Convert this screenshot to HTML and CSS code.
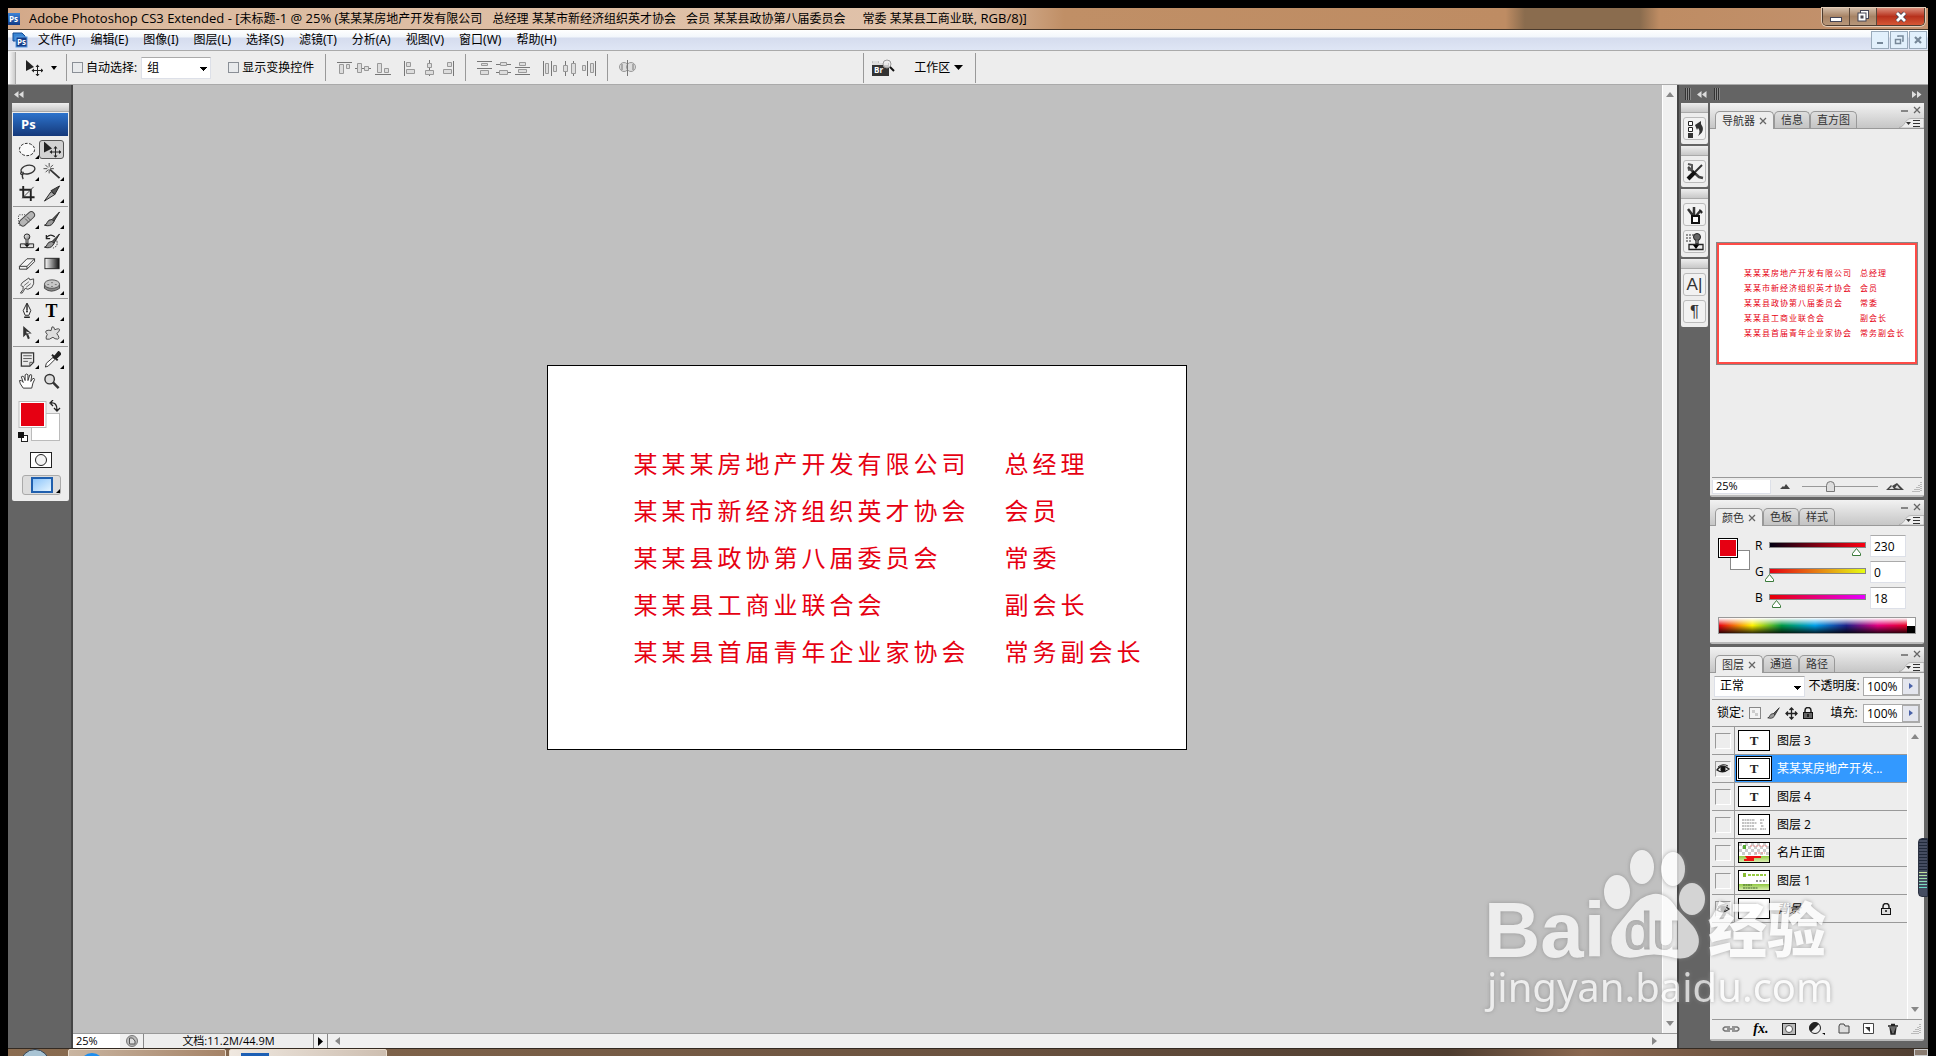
FILE: index.html
```html
<!DOCTYPE html>
<html lang="zh-CN">
<head>
<meta charset="utf-8">
<title>Adobe Photoshop CS3 Extended</title>
<link rel="stylesheet" href="styles.css">
</head>
<body>
<svg class="defs" aria-hidden="true">
  <defs>
    <linearGradient id="metal" x1="0" y1="0" x2="1" y2="1"><stop offset="0" stop-color="#fff"/><stop offset="1" stop-color="#777"/></linearGradient>
    <linearGradient id="bw"><stop offset="0" stop-color="#fff"/><stop offset="1" stop-color="#111"/></linearGradient>
    <linearGradient id="sky" x1="0" y1="0" x2="1" y2="1"><stop offset="0" stop-color="#8cc4fa"/><stop offset="1" stop-color="#e4f4ff"/></linearGradient>
    <linearGradient id="blue" x1="0" y1="0" x2="0" y2="1"><stop offset="0" stop-color="#3d84d8"/><stop offset="1" stop-color="#123b86"/></linearGradient>
    <linearGradient id="leaf" x1="0" y1="0" x2="0" y2="1"><stop offset="0" stop-color="#8fc740"/><stop offset="1" stop-color="#dcefb4"/></linearGradient>
    <symbol id="move" viewBox="0 0 18 16"><path d="M1 0v11l8-4z" fill="#222"/><path d="M12.500 6v9M8 10.500h9" stroke="#222"/><path d="M12.500 4.500l2 2.500h-4zM12.500 16.500l2-2.500h-4zM6.500 10.500l2.500-2v4zM18.500 10.500l-2.500-2v4z" fill="#222"/></symbol>
    <symbol id="handle" viewBox="0 0 9 8"><path d="M4.500.500l4 5v2h-8v-2z" fill="#fff" stroke="#3a7a3a"/></symbol>
    <symbol id="tri-l" viewBox="0 0 10 7"><path d="M4.500 0v7L0 3.500zM9.500 0v7L5 3.500z" fill="#ddd"/></symbol>
    <symbol id="tri-r" viewBox="0 0 10 7"><path d="M0 0v7l4.500-3.500zM5 0v7l4.500-3.500z" fill="#ddd"/></symbol>
    <symbol id="menu" viewBox="0 0 25 10"><path d="M0 9.500C6 9 6 .500 12 .500h13V10H0z" fill="#ededed" stroke="#999" stroke-width=".6"/><path d="M7 4h5l-2.500 3z" fill="#333"/><path d="M14 2.500h7M14 5.500h7M14 8.500h7" stroke="#333"/></symbol>
    <symbol id="min" viewBox="0 0 8 8"><path d="M1 5h7" stroke="#666" stroke-width="1.500"/></symbol>
    <symbol id="x" viewBox="0 0 8 8"><path d="M1 1l6 6M7 1L1 7" stroke="#666" stroke-width="1.300"/></symbol>
    <symbol id="eye" viewBox="0 0 14 10"><path d="M1 6Q6-1 13 5Q7 10 1 6z" fill="#fff" stroke="#222" stroke-width="1.300"/><circle cx="7" cy="5" r="2.600" fill="#111"/><path d="M2 3Q7-1 12 2" stroke="#222" fill="none"/></symbol>
    <symbol id="lock" viewBox="0 0 10 12"><path d="M2 6V3.500a3 3 0 0 1 6 0V6" fill="none" stroke="#222" stroke-width="1.500"/><rect x=".5" y="5.500" width="9" height="6" fill="#666" stroke="#111"/><path d="M5 7v3" stroke="#111" stroke-width="1.500"/></symbol>
    <symbol id="lock-open" viewBox="0 0 10 12"><path d="M2 6V3.500a3 3 0 0 1 6 0V6" fill="none" stroke="#222" stroke-width="1.500"/><rect x=".5" y="5.500" width="9" height="6" fill="#ddd" stroke="#111"/><path d="M5 7v2" stroke="#111" stroke-width="1.500"/></symbol>
    <symbol id="grip" viewBox="0 0 10 10"><path d="M9 0v10M7 3v7M5 5v5M3 7v3M1 9v1" stroke="#888" stroke-dasharray="1 1"/></symbol>
    <symbol id="brush" viewBox="0 0 18 18"><path d="M17 1L9 9l2 2z" fill="#555" stroke="#222"/><path d="M9 9Q5 9 4 12T1 15Q7 17 10 13L11 11z" fill="#999" stroke="#222"/></symbol>
    <symbol id="stamp" viewBox="0 0 18 18"><circle cx="9" cy="4" r="3" fill="url(#metal)" stroke="#222"/><path d="M8 7v4h2V7M2 11.500h14v4H2z" fill="#ddd" stroke="#222"/><path d="M6 12h6l-3 3z" fill="#111"/></symbol>
  </defs>
</svg>

<div class="window">
<header class="titlebar">
  <svg class="ic12" viewBox="0 0 12 12"><rect width="12" height="12" fill="url(#blue)"/><text x="1" y="9" class="ps-mini">Ps</text></svg>
  <h1>Adobe Photoshop CS3 Extended - [<span>未标题</span>-1 @ 25% (<span>某某某房地产开发有限公司</span>&nbsp;&nbsp; <span>总经理</span> <span>某某市新经济组织英才协会</span>&nbsp;&nbsp; <span>会员</span> <span>某某县政协第八届委员会</span>&nbsp;&nbsp;&nbsp;&nbsp; <span>常委</span> <span>某某县工商业联</span>, RGB/8)]</h1>
  <div class="winbtns">
    <button class="wb" aria-label="最小化"><svg width="12" height="12" viewBox="0 0 12 12"><rect x=".5" y="6.500" width="11" height="4" fill="#fff" stroke="#445"/></svg></button>
    <button class="wb" aria-label="还原"><svg width="13" height="13" viewBox="0 0 13 13"><rect x="3.500" y=".5" width="8" height="8" fill="#fff" stroke="#445"/><rect x="1" y="3" width="8" height="8" fill="#fff" stroke="#445"/><rect x="4" y="6" width="2" height="2" fill="#654" stroke="#445"/></svg></button>
    <button class="wb close" aria-label="关闭"><svg width="12" height="12" viewBox="0 0 12 12"><path d="M2 2l8 8M10 2l-8 8" stroke="#445" stroke-width="4.500"/><path d="M2 2l8 8M10 2l-8 8" stroke="#fff" stroke-width="2.800"/></svg></button>
  </div>
</header>

<nav class="menubar">
  <svg width="16" height="16" viewBox="0 0 16 16"><path d="M1 1h9l3 3v5H1z" fill="#3a86d4" stroke="#124a94"/><rect x="4" y="5" width="11" height="10" fill="#123b86" stroke="#5a9be0"/><text x="5" y="13" class="ps-mini">Ps</text></svg>
  <div class="menus">
    <button>文件(F)</button><button>编辑(E)</button><button>图像(I)</button><button>图层(L)</button><button>选择(S)</button><button>滤镜(T)</button><button>分析(A)</button><button>视图(V)</button><button>窗口(W)</button><button>帮助(H)</button>
  </div>
  <div class="mdi">
    <button aria-label="最小化"><svg width="12" height="12" viewBox="0 0 12 12"><path d="M3 9h6" stroke="#789" stroke-width="2"/></svg></button>
    <button aria-label="还原"><svg width="12" height="12" viewBox="0 0 12 12"><path d="M5 3V2h5v5H9M2.500 5.500h5v4h-5z" fill="none" stroke="#789" stroke-width="1.500"/></svg></button>
    <button aria-label="关闭"><svg width="12" height="12" viewBox="0 0 12 12"><path d="M3 3l6 6M9 3l-6 6" stroke="#789" stroke-width="2.200"/></svg></button>
  </div>
</nav>

<div class="options">
  <div class="opt-grip"></div>
  <button class="opt-move" aria-label="移动工具"><svg width="18" height="16"><use href="#move"/></svg><svg width="6" height="4" viewBox="0 0 6 4"><path d="M0 0h6L3 4z"/></svg></button>
  <i class="vr"></i>
  <label class="chk"><input type="checkbox">自动选择:</label>
  <select class="opt-sel" aria-label="自动选择"><option>组</option></select>
  <label class="chk second"><input type="checkbox">显示变换控件</label>
  <i class="vr"></i>
  <div class="aligns">
    <svg viewBox="0 0 54 16" width="54" height="16"><path d="M0 2.500h15M18 8.500h16M38 14.500h16"/><path class="b" d="M2.500 4.500h4v9h-4zM9.500 4.500h3v4h-3zM20.500 3.500h4v9h-4zM27.500 6.500h4v4h-4zM40.500 3.500h4v9h-4zM47.500 8.500h4v4h-4z"/></svg>
    <svg viewBox="0 0 52 16" width="52" height="16"><path d="M1.500 1v15M26.500 0v16M50.500 1v15"/><path class="b" d="M3.500 2.500h4v4h-4zM3.500 9.500h8v4h-8zM24.500 3.500h4v4h-4zM22.500 10.500h8v4h-8zM44.500 2.500h4v4h-4zM40.500 9.500h8v4h-8z"/></svg>
  </div>
  <i class="vr"></i>
  <div class="aligns">
    <svg viewBox="0 0 54 16" width="54" height="16"><path d="M0 1.500h15M0 8.500h15M19 4.500h15M19 12.500h15M38 7.500h15M38 14.500h15"/><path class="b" d="M4.500 3.500h6v2h-6zM3.500 10.500h8v4h-8zM23.500 2.500h6v3h-6zM22.500 10.500h8v4h-8zM42.500 2.500h6v3h-6zM41.500 9.500h8v3h-8z"/></svg>
    <svg viewBox="0 0 54 16" width="54" height="16"><path d="M.5 1v15M8.500 1v15M22.500 1v15M30.500 1v15M44.500 1v15M52.500 1v15"/><path class="b" d="M2.500 3.500h3v10h-3zM10.500 5.500h3v6h-3zM20.500 5.500h4v6h-4zM28.500 3.500h4v10h-4zM39.500 5.500h3v5h-3zM47.500 3.500h3v9h-3z"/></svg>
  </div>
  <i class="vr"></i>
  <div class="aligns"><svg viewBox="0 0 17 16" width="17" height="16"><circle cx="5" cy="7" r="4.500" class="b"/><circle cx="12" cy="7" r="4.500" class="b"/><path d="M8.500 0v16M3 4v6M14 4v6"/></svg></div>
  <div class="bridge">
    <button aria-label="转到 Bridge"><svg width="24" height="17" viewBox="0 0 24 17"><path d="M0 4l1-2h5l1 2h10v13H0z" fill="#333"/><path d="M0 4l1-2h5l1 2h9v2H0z" fill="#ddd"/><text x="2" y="14" class="br-mini">Br</text><circle cx="15" cy="5" r="4" fill="#eee" fill-opacity=".8" stroke="#999"/><path d="M18 8l4 4" stroke="#111" stroke-width="2"/></svg></button>
    <button class="ws">工作区<svg width="9" height="6" viewBox="0 0 9 6"><path d="M0 0h9L4.500 5z"/></svg></button>
  </div>
</div>

<main class="work">
  <aside class="toolcol">
    <button class="collapse" aria-label="折叠工具"><svg width="10" height="7"><use href="#tri-l"/></svg></button>
    <div class="toolbox">
      <div class="strip"></div>
      <div class="banner">Ps</div>
      <div class="tools">
        <button class="more" aria-label="椭圆选框"><svg viewBox="0 0 18 18"><ellipse cx="9" cy="9" rx="8" ry="6.500" fill="#fafafa" stroke="#222" stroke-dasharray="3 1.500"/></svg></button>
        <button class="on" aria-label="移动"><svg viewBox="0 0 18 16"><use href="#move"/></svg></button>
        <button class="more" aria-label="套索"><svg viewBox="0 0 18 18"><ellipse cx="10" cy="7" rx="7.500" ry="4.500" transform="rotate(-12 10 7)" fill="none" stroke="#333" stroke-width="1.400"/><path d="M4 9q-3 2-1 3t2-1q-2 3 0 6" fill="none" stroke="#333" stroke-width="1.300"/></svg></button>
        <button class="more" aria-label="魔棒"><svg viewBox="0 0 18 18"><path d="M7 7l10 9" stroke="#333" stroke-width="2"/><path d="M6 0v12M0 6h12M2 2l8 8M10 2l-8 8" stroke="#444" stroke-dasharray="4 3"/></svg></button>
        <button aria-label="裁剪"><svg viewBox="0 0 18 18"><path d="M5 1v12h12M1 5h12v12" fill="none" stroke="#222" stroke-width="2"/><path d="M4 14L16 2" stroke="#444"/></svg></button>
        <button class="more" aria-label="切片"><svg viewBox="0 0 18 18"><path d="M1 17L8 7l4 3z" fill="#aaa" stroke="#222"/><path d="M8 6l4 4 5-9z" fill="#555" stroke="#222"/></svg></button>
      </div>
      <hr>
      <div class="tools">
        <button class="more" aria-label="修复画笔"><svg viewBox="0 0 18 18"><path d="M0 5v9M1 4h6M1 15h6" stroke="#222" stroke-dasharray="1 1.500"/><rect x="0" y="5" width="19" height="7" rx="3.500" transform="rotate(-42 9 9)" fill="#b5b5b5" stroke="#444"/><path d="M7 8l4 4M9 6l4 4" stroke="#555"/></svg></button>
        <button class="more" aria-label="画笔"><svg viewBox="0 0 18 18"><use href="#brush"/></svg></button>
        <button class="more" aria-label="仿制图章"><svg viewBox="0 0 18 18"><use href="#stamp"/></svg></button>
        <button class="more" aria-label="历史记录画笔"><svg viewBox="0 0 18 18"><use href="#brush"/><path d="M3 5q4-5 9-1M3 2v4h4" fill="none" stroke="#222" stroke-width="1.300"/><path d="M14 8q2 6-4 8" fill="none" stroke="#333" stroke-dasharray="2 1"/></svg></button>
        <button class="more" aria-label="橡皮擦"><svg viewBox="0 0 18 18"><path d="M1 12L9 4h8l-8 8zM1 12v3h8v-3M9 15l8-8V4" fill="#f4f4f4" stroke="#333"/></svg></button>
        <button class="more" aria-label="渐变"><svg viewBox="0 0 18 18"><rect x="1.500" y="3.500" width="15" height="11" fill="url(#bw)" stroke="#222"/></svg></button>
        <button class="more" aria-label="涂抹"><svg viewBox="0 0 18 18"><path d="M2 17q4-4 3-7Q1 10 4 6L11 1l1 2 4-1q1 6-2 9l-4 2-3-1-3 5z" fill="#eee" stroke="#444"/><path d="M6 9l5-4M8 11l5-4" stroke="#666"/></svg></button>
        <button class="more" aria-label="海绵"><svg viewBox="0 0 18 18"><path d="M1 8v4q7 6 16 0V8" fill="#888" stroke="#444"/><ellipse cx="9" cy="7.500" rx="8" ry="4.500" fill="#c8c8c8" stroke="#555"/><path d="M4 8h2M8 6h2M12 8h2M8 10h2" stroke="#777"/></svg></button>
      </div>
      <hr>
      <div class="tools">
        <button class="more" aria-label="钢笔"><svg viewBox="0 0 18 18"><path d="M9 0l4 8-2 5H7L5 8z" fill="#f6f6f6" stroke="#222"/><path d="M9 1v7M6 15h6" stroke="#222" stroke-width="1.500"/><circle cx="9" cy="9" r="1" fill="#222"/></svg></button>
        <button class="more type" aria-label="文字">T</button>
        <button class="more" aria-label="路径选择"><svg viewBox="0 0 18 18"><path d="M5 1v12l3-3 2 5 2-1-2-5h4z" fill="#333"/><path d="M8 7l4 1-3 1 1 3" fill="#eee"/></svg></button>
        <button class="more" aria-label="形状"><svg viewBox="0 0 18 18"><path d="M9 2q2-1 3 3 5-2 5 0 0 2-3 4 4 5 1 6-3 0-5-2-4 3-7 2-1-2 1-5-3-3-1-4 3-1 5 0z" fill="#ddd" stroke="#444"/></svg></button>
      </div>
      <hr>
      <div class="tools">
        <button class="more" aria-label="注释"><svg viewBox="0 0 18 18"><path d="M3 2h13v10l-4 4H3z" fill="#e8e8e8" stroke="#333" stroke-width="1.300"/><path d="M5 5h9M5 8h9M5 11h5M12 16v-4h4" stroke="#555" fill="none"/></svg></button>
        <button class="more" aria-label="吸管"><svg viewBox="0 0 18 18"><path d="M2 17l1-4 8-7 2 2-8 8z" fill="#fff" stroke="#333"/><path d="M9 4l6 6M11 7l5-6 2 2-5 5z" stroke="#222" stroke-width="2" fill="#222"/></svg></button>
        <button aria-label="抓手"><svg viewBox="0 0 18 18"><path d="M5 16Q1 11 1 8q2-1 4 2L3 4q2-2 3 1l1 3L7 2q2-2 3 0l0 6 2-6q2-1 2 1l-1 6 2-3q2-1 2 1-2 3-3 9z" fill="#fff" stroke="#333"/></svg></button>
        <button aria-label="缩放"><svg viewBox="0 0 18 18"><circle cx="6.500" cy="6.500" r="5" fill="#ddd" stroke="#333" stroke-width="1.500"/><path d="M10 10l6 6" stroke="#333" stroke-width="2.600"/></svg></button>
      </div>
      <div class="swatches">
        <svg width="46" height="46" viewBox="0 0 46 46"><rect x="14.500" y="13.500" width="28" height="27" fill="#fff" stroke="#bbb"/><rect x="2" y="1.500" width="27" height="26" fill="#fff" stroke="#bbb"/><rect x="4" y="3" width="23" height="23" fill="#e60012"/><path d="M34 3q6-1 6 7M36 0l-3 3 3 3M37 8l3 3 3-3" fill="none" stroke="#222" stroke-width="1.300"/><rect x="4.500" y="35.500" width="6" height="6" fill="#fff" stroke="#222"/><rect x="1" y="32" width="6" height="6" fill="#111"/></svg>
      </div>
      <button class="mask" aria-label="快速蒙版"><svg width="22" height="16" viewBox="0 0 22 16"><rect x=".5" y=".5" width="21" height="15" fill="#fff" stroke="#222"/><circle cx="11" cy="8" r="5.500" fill="#f4f4f4" stroke="#222"/></svg></button>
      <button class="screen more" aria-label="屏幕模式"><svg width="22" height="16" viewBox="0 0 22 16"><rect width="22" height="16" fill="#1f5fae"/><rect x="2" y="2" width="18" height="12" fill="url(#sky)"/></svg></button>
    </div>
  </aside>

  <section class="docarea">
    <div class="canvas">
      <article class="card">
        <p><span>某某某房地产开发有限公司</span><span>总经理</span></p>
        <p><span>某某市新经济组织英才协会</span><span>会员</span></p>
        <p><span>某某县政协第八届委员会</span><span>常委</span></p>
        <p><span>某某县工商业联合会</span><span>副会长</span></p>
        <p><span>某某县首届青年企业家协会</span><span>常务副会长</span></p>
      </article>
    </div>
    <div class="vscroll"><svg width="8" height="5" viewBox="0 0 8 5"><path d="M4 0l4 5H0z"/></svg><svg width="8" height="5" viewBox="0 0 8 5"><path d="M4 5L0 0h8z"/></svg></div>
    <footer class="status">
      <input class="zoom" aria-label="缩放比例" value="25%">
      <span class="sticon"><svg width="12" height="12" viewBox="0 0 12 12"><circle cx="6" cy="6" r="5.500" fill="#bbb" stroke="#777"/><path d="M3.500 3h3l2.500 3v3H3.500z" fill="#ddd" stroke="#555"/></svg></span>
      <span class="docinfo">文档:11.2M/44.9M</span>
      <button class="play" aria-label="更多"><svg width="5" height="9" viewBox="0 0 5 9"><path d="M0 0l5 4.500L0 9z"/></svg></button>
      <div class="hscroll"><svg width="5" height="8" viewBox="0 0 5 8"><path d="M5 0v8L0 4z"/></svg><svg width="5" height="8" viewBox="0 0 5 8"><path d="M0 0v8l5-4z"/></svg></div>
    </footer>
  </section>

  <aside class="dock">
    <div class="dockhead"><i class="bars"></i><svg width="10" height="7"><use href="#tri-l"/></svg><i class="bars wide"></i><svg class="end" width="10" height="7"><use href="#tri-r"/></svg></div>
    <div class="dockbody">
      <div class="iconcol">
        <div class="icongroup"><div class="strip"></div><button aria-label="历史记录"><svg viewBox="0 0 18 18"><path d="M2.500 1.500h4v4h-4zM2.500 7.500h4v4h-4z" fill="#fff" stroke="#222"/><path d="M2 13h5v5H2z" fill="#333"/><path d="M9 5l6-4v3q5 7-3 12 3-5 0-8l-1 2z" fill="#333"/></svg></button></div>
        <div class="icongroup"><div class="strip"></div><button aria-label="工具预设"><svg viewBox="0 0 18 18"><path d="M2 4l11 10 4 1" stroke="#444" stroke-width="2.500" fill="none"/><path d="M2 1l4 1v4L2 7" fill="none" stroke="#555" stroke-width="2"/><path d="M16 2L9 9" stroke="#333" stroke-width="2"/><path d="M9 9l-7 7" stroke="#111" stroke-width="4"/></svg></button></div>
        <div class="icongroup"><div class="strip"></div><button aria-label="画笔"><svg viewBox="0 0 18 18"><path d="M2 3l6 8M8 1v8M15 4l-5 6" stroke="#333" stroke-width="2.500"/><path d="M13 3l4 3-2 2z" fill="#222"/><rect x="6" y="10" width="7" height="7" fill="#fff" stroke="#111" stroke-width="2"/></svg></button><button aria-label="仿制源"><svg viewBox="0 0 18 18"><path d="M0 2h8M0 5h6M0 8h6" stroke="#333" stroke-dasharray="2 1"/><circle cx="11" cy="4" r="3.500" fill="#666" stroke="#222"/><path d="M10 7v4h2V7M3 11.500h14v5H3z" fill="#eee" stroke="#222" stroke-width="1.300"/><path d="M7 12h6l-3 4z"/></svg></button></div>
        <div class="icongroup"><div class="strip"></div><button class="glyph" aria-label="字符">A|</button><button class="glyph" aria-label="段落">¶</button></div>
      </div>

      <div class="panels">
        <section class="panel nav">
          <div class="phead"><div class="tabs"><button class="tab on">导航器<svg width="8" height="8"><use href="#x"/></svg></button><button class="tab">信息</button><button class="tab">直方图</button></div><div class="pctl"><span><button aria-label="最小化"><svg width="8" height="8"><use href="#min"/></svg></button><button aria-label="关闭"><svg width="8" height="8"><use href="#x"/></svg></button></span><svg width="25" height="10"><use href="#menu"/></svg></div></div>
          <div class="navview">
            <div class="thumb">
              <p><span>某某某房地产开发有限公司</span><span>总经理</span></p>
              <p><span>某某市新经济组织英才协会</span><span>会员</span></p>
              <p><span>某某县政协第八届委员会</span><span>常委</span></p>
              <p><span>某某县工商业联合会</span><span>副会长</span></p>
              <p><span>某某县首届青年企业家协会</span><span>常务副会长</span></p>
            </div>
          </div>
          <div class="navfoot">
            <input aria-label="导航缩放" value="25%">
            <svg width="10" height="5" viewBox="0 0 10 5"><path d="M0 5l3-3 1 1 2-3 4 5z" fill="#444"/></svg>
            <input type="range" aria-label="缩放滑块" min="0" max="100" value="36">
            <svg width="18" height="7" viewBox="0 0 18 7"><path d="M0 7l5-5 1 1 5-3 7 7z" fill="#444"/><path d="M3 6l3-3 2 3M9 5l2-3 3 4" fill="#ddd"/></svg>
            <svg class="end" width="10" height="10"><use href="#grip"/></svg>
          </div>
        </section>

        <section class="panel">
          <div class="phead"><div class="tabs"><button class="tab on">颜色<svg width="8" height="8"><use href="#x"/></svg></button><button class="tab">色板</button><button class="tab">样式</button></div><div class="pctl"><span><button aria-label="最小化"><svg width="8" height="8"><use href="#min"/></svg></button><button aria-label="关闭"><svg width="8" height="8"><use href="#x"/></svg></button></span><svg width="25" height="10"><use href="#menu"/></svg></div></div>
          <div class="color">
            <svg width="33" height="33" viewBox="0 0 33 33"><rect x="12.500" y="12.500" width="19" height="19" fill="#fff" stroke="#888"/><rect x=".5" y=".5" width="19" height="19" fill="#fff" stroke="#000"/><rect x="2" y="2" width="16" height="16" fill="#e60012"/></svg>
            <div class="sliders">
              <div class="sl"><label for="r">R</label><svg viewBox="0 0 105 16" width="105" height="16"><linearGradient id="gr"><stop stop-color="#000012"/><stop offset="1" stop-color="#ff0012"/></linearGradient><rect x="4.500" y="1.500" width="96" height="5" fill="url(#gr)" stroke="#888"/><use href="#handle" x="87" y="7" width="9" height="8"/></svg><input id="r" value="230"></div>
              <div class="sl"><label for="g">G</label><svg viewBox="0 0 105 16" width="105" height="16"><linearGradient id="gg"><stop stop-color="#e60012"/><stop offset="1" stop-color="#e6ff12"/></linearGradient><rect x="4.500" y="1.500" width="96" height="5" fill="url(#gg)" stroke="#888"/><use href="#handle" x="0" y="7" width="9" height="8"/></svg><input id="g" value="0"></div>
              <div class="sl"><label for="b">B</label><svg viewBox="0 0 105 16" width="105" height="16"><linearGradient id="gb"><stop stop-color="#e60000"/><stop offset="1" stop-color="#e600ff"/></linearGradient><rect x="4.500" y="1.500" width="96" height="5" fill="url(#gb)" stroke="#888"/><use href="#handle" x="7" y="7" width="9" height="8"/></svg><input id="b" value="18"></div>
            </div>
            <div class="spectrum"><i></i><em></em></div>
          </div>
        </section>

        <section class="panel layers">
          <div class="phead"><div class="tabs"><button class="tab on">图层<svg width="8" height="8"><use href="#x"/></svg></button><button class="tab">通道</button><button class="tab">路径</button></div><div class="pctl"><span><button aria-label="最小化"><svg width="8" height="8"><use href="#min"/></svg></button><button aria-label="关闭"><svg width="8" height="8"><use href="#x"/></svg></button></span><svg width="25" height="10"><use href="#menu"/></svg></div></div>
          <div class="lrow">
            <select aria-label="混合模式"><option>正常</option></select>
            <label for="op">不透明度:</label>
            <span class="pct"><input id="op" value="100%"><button aria-label="不透明度滑块"><svg width="4" height="6" viewBox="0 0 4 6"><path d="M0 0l4 3-4 3z" fill="#4a62a8"/></svg></button></span>
          </div>
          <div class="lrow locks">
            <span>锁定:</span>
            <svg width="12" height="12" viewBox="0 0 12 12"><rect x=".5" y=".5" width="11" height="11" fill="#f4f4f4" stroke="#888"/><path d="M3 3h3v3H3zM6 6h3v3H6z" fill="#ccc"/></svg>
            <svg width="13" height="13"><use href="#brush"/></svg>
            <svg width="13" height="13" viewBox="0 0 13 13"><path d="M6.500 1v11M1 6.500h11M4.500 3l2-2 2 2M4.500 10l2 2 2-2M3 4.500l-2 2 2 2M10 4.500l2 2-2 2" stroke="#222" fill="none" stroke-width="1.300"/></svg>
            <svg width="10" height="12"><use href="#lock"/></svg>
            <label for="fi">填充:</label>
            <span class="pct"><input id="fi" value="100%"><button aria-label="填充滑块"><svg width="4" height="6" viewBox="0 0 4 6"><path d="M0 0l4 3-4 3z" fill="#4a62a8"/></svg></button></span>
          </div>
          <div class="lbody">
            <ul class="llist">
              <li><span class="vis"><i></i></span><span class="th t">T</span><span>图层 3</span></li>
              <li class="sel"><span class="vis"><i><svg width="14" height="10"><use href="#eye"/></svg></i></span><span class="th t">T</span><span>某某某房地产开发...</span></li>
              <li><span class="vis"><i></i></span><span class="th t">T</span><span>图层 4</span></li>
              <li><span class="vis"><i></i></span><span class="th"><svg viewBox="0 0 30 19"><path d="M3 5h13M3 8h15M3 11h12M3 14h15M21 5h4M21 8h3M22 11h3M21 14h6" stroke="#888" stroke-dasharray="2 .5"/></svg></span><span>图层 2</span></li>
              <li><span class="vis"><i></i></span><span class="th"><svg viewBox="0 0 30 19"><path d="M0 1.500h30M0 7.500h30" stroke="#ccc" stroke-width="3" stroke-dasharray="3 3"/><path d="M3 4.500h27M3 10.500h27" stroke="#ccc" stroke-width="3" stroke-dasharray="3 3"/><path d="M4 2h3v4H4z" fill="#5a3"/><path d="M11 3h17M16 10h10" stroke="#e88" stroke-dasharray="2 1"/><rect y="13" width="30" height="6" fill="url(#leaf)"/><path d="M6 13h16v2h-7v3H5v-2h3z" fill="#e11"/></svg></span><span>名片正面</span></li>
              <li><span class="vis"><i></i></span><span class="th"><svg viewBox="0 0 30 19"><path d="M4 2h3v4H4z" fill="#8b3"/><path d="M9 4h18" stroke="#9c4" stroke-width="2" stroke-dasharray="3 1"/><path d="M17 10h11" stroke="#222" stroke-dasharray="2 1.500"/><rect y="13" width="30" height="6" fill="url(#leaf)"/><path d="M4 14h9M4 17h15" stroke="#463" stroke-dasharray="2 .5"/></svg></span><span>图层 1</span></li>
              <li><span class="vis"><i><svg width="14" height="10"><use href="#eye"/></svg></i></span><span class="th"></span><em>背景</em><svg class="lk" width="10" height="12"><use href="#lock-open"/></svg></li>
            </ul>
            <div class="vscroll slim"><svg width="8" height="5" viewBox="0 0 8 5"><path d="M4 0l4 5H0z"/></svg><svg width="8" height="5" viewBox="0 0 8 5"><path d="M4 5L0 0h8z"/></svg></div>
          </div>
          <div class="lfoot">
            <button aria-label="链接"><svg width="18" height="8" viewBox="0 0 18 8"><path d="M8 2H3q-4 2 0 4h5M10 2h5q4 2 0 4h-5M5 4h8" fill="none" stroke="#777" stroke-width="1.500"/></svg></button>
            <button class="fx" aria-label="图层样式">fx.</button>
            <button aria-label="蒙版"><svg width="14" height="12" viewBox="0 0 14 12"><rect x=".5" y=".5" width="13" height="11" fill="#bbb" stroke="#222"/><circle cx="7" cy="6" r="3.500" fill="#fff" stroke="#555"/></svg></button>
            <button aria-label="调整"><svg width="16" height="13" viewBox="0 0 16 13"><circle cx="6" cy="6" r="5.500" fill="#eee" stroke="#222"/><path d="M2 10A5.500 5.500 0 0 1 10 2z" fill="#222"/><path d="M13 11h3v2z"/></svg></button>
            <button aria-label="新建组"><svg width="12" height="11" viewBox="0 0 12 11"><path d="M1 3l1-2h4l1 2h4v7H1z" fill="#ddd" stroke="#444"/></svg></button>
            <button aria-label="新建图层"><svg width="11" height="11" viewBox="0 0 11 11"><path d="M.5.500h10v10h-10z" fill="#fff" stroke="#444"/><path d="M2 4h5v5z" fill="#333"/></svg></button>
            <button aria-label="删除"><svg width="10" height="12" viewBox="0 0 10 12"><path d="M0 3h10M3 1.500h4M2 4l1 7h4l1-7M4 4v7M6 4v7" fill="none" stroke="#222" stroke-width="1.300"/></svg></button>
            <svg width="10" height="10"><use href="#grip"/></svg>
          </div>
        </section>
      </div>
    </div>
  </aside>
</main>

<div class="gauge"></div>
<svg class="mark" width="360" height="170" viewBox="0 0 360 170">
  <mask id="cut" maskUnits="userSpaceOnUse" x="0" y="0" width="360" height="170"><rect width="360" height="170" fill="#fff"/><text x="141" y="106" class="m-du">du</text></mask>
  <g class="ink">
    <text x="1" y="114" class="m-bai">Bai</text>
    <path mask="url(#cut)" d="M170 51q14-2 24 15l16 17q10 13 3 25-9 11-25 6-17-5-34 0-18 3-24-8-5-12 4-23l14-17q9-13 22-15z"/>
    <ellipse cx="134" cy="49" rx="13" ry="17"/><ellipse cx="159" cy="24" rx="12" ry="17"/><ellipse cx="190" cy="26" rx="12" ry="17"/><ellipse cx="209" cy="56" rx="13" ry="16"/>
    <text x="225" y="109" class="m-cn">经验</text>
    <text x="4" y="159" class="m-url">jingyan.baidu.com</text>
  </g>
</svg>
</div>

<footer class="taskbar">
  <span class="orb"></span>
  <button aria-label="浏览器"><i class="ie"></i></button>
  <button class="act" aria-label="Photoshop"><i class="psb"></i></button>
  <span class="desk"></span>
</footer>
</body>
</html>
```
FILE: styles.css
```css
* { box-sizing: border-box; }
body { margin: 0; height: 100vh; padding: 8px 8px 0; background: #000; display: flex; flex-direction: column; overflow: hidden; font: 12px/16px "Open Sans", "Noto Sans CJK SC", sans-serif; color: #000; }
button { border: 0; padding: 0; margin: 0; background: none; font: inherit; color: inherit; display: flex; align-items: center; justify-content: center; }
input, select { font: inherit; color: inherit; border: 1px solid #dde0e8; border-top-color: #aaa; background: #fff; border-radius: 0; margin: 0; padding: 0 3px; min-width: 0; }
select { appearance: none; }
svg { display: block; flex: none; }
p, h1, ul { margin: 0; padding: 0; }
.defs { position: absolute; width: 0; height: 0; }
.window { flex: 1; min-height: 0; display: flex; flex-direction: column; position: relative; background: #ededed; }

.titlebar { height: 22px; display: flex; align-items: center; padding: 0 3px 0 0; border-bottom: 1px solid #4a3a2c; background: linear-gradient(90deg, #d3a888, #dcbba0 8%, #e0c2aa 50%, #c08f66 55%, #be8c63 78%, #8a6c4e 79%, #8a6c4e 85%, #be8c63 86%, #c49370); }
.ic12 { width: 12px; height: 12px; }
.ps-mini { font: bold 8px/8px "Open Sans", sans-serif; fill: #fff; }
.br-mini { font: bold 8px/8px "Open Sans", sans-serif; fill: #fff; }
.titlebar h1 { flex: 1; margin-left: 9px; font: 400 13px/20px "Open Sans", "Noto Sans CJK SC", sans-serif; white-space: nowrap; overflow: hidden; }
.titlebar h1 span { font-size: 12px; }
.winbtns { display: flex; align-self: flex-start; border: 1px solid #4d3c30; border-top: 0; border-radius: 0 0 5px 5px; overflow: hidden; box-shadow: 0 0 0 1px #e4cdb8; }
.wb { width: 27px; height: 17px; background: linear-gradient(#d3bda9, #a78365 50%, #b8977a); border-right: 1px solid #5c493b; }
.wb.close { width: 47px; border: 0; background: linear-gradient(#dc8f7c, #b7311c 50%, #d65836); }

.menubar { height: 21px; display: flex; align-items: center; padding: 0 1px 0 4px; background: linear-gradient(#fff, #f2f6fb 35%, #d5dcee 40%, #dfe6f5); border-bottom: 1px solid #aaa; }
.menus { display: flex; gap: 15px; margin-left: 10px; flex: 1; font-family: "Noto Sans", "Noto Sans CJK SC", sans-serif; }
.mdi { display: flex; gap: 1px; }
.mdi button { width: 18px; height: 18px; border: 1px solid #9ab; background: #e2f0fc; }

.options { height: 34px; display: flex; align-items: center; border-bottom: 1px solid #aaa; background: #ededed; }
.opt-grip { width: 8px; height: 32px; border-right: 1px solid #aaa; background: linear-gradient(90deg, #fff, #ccc); }
.opt-move { width: 50px; gap: 8px; }
.vr { width: 1px; height: 27px; background: #999; flex: none; }
.chk { display: flex; align-items: center; gap: 3px; margin-left: 5px; white-space: nowrap; }
.chk input { appearance: none; width: 11px; height: 11px; padding: 0; border: 1px solid #8a8f96; background: #e8eaec; }
.chk.second { margin: 0 11px 0 17px; }
.opt-sel { width: 70px; height: 22px; margin-left: 4px; padding: 0 5px; }
.opt-sel, .lrow select { background: linear-gradient(#000, #000) no-repeat right 3px top 9px / 7px 1px, linear-gradient(#000, #000) no-repeat right 4px top 10px / 5px 1px, linear-gradient(#000, #000) no-repeat right 5px top 11px / 3px 1px, linear-gradient(#000, #000) no-repeat right 6px top 12px / 1px 1px, #fff; }
.aligns { display: flex; gap: 12px; padding: 0 10px 0 11px; }
.aligns path, .aligns circle { stroke: #777; fill: none; }
.aligns .b { fill: #ddd; stroke: #999; }
.bridge { margin-left: 217px; padding: 0 12px 0 8px; height: 30px; display: flex; gap: 18px; border-left: 1px solid #999; border-right: 1px solid #999; }
.ws { gap: 4px; }

.work { flex: 1; min-height: 0; display: flex; }
.toolcol { width: 65px; background: #646464; border-right: 2px solid #444; padding: 0 0 0 4px; }
.collapse { height: 18px; padding-left: 2px; }
.toolbox { width: 57px; background: #ededed; border-radius: 2px; padding-bottom: 6px; }
.strip { height: 9px; background: linear-gradient(#eee, #c8c8c8); border-bottom: 1px solid #aaa; }
.banner { height: 23px; margin: 1px 1px 2px; padding-left: 8px; background: linear-gradient(#2d73cc, #15397a); color: #fff; font: bold 13px/23px "Open Sans", sans-serif; }
.tools { display: grid; grid-template-columns: 25px 25px; padding-left: 2px; }
.tools button { height: 22px; position: relative; }
.tools svg { width: 18px; height: 17px; }
.tools .on { border: 1px solid #555; border-radius: 3px; background: #d2d2d2; height: 19px; align-self: center; }
.more { position: relative; }
.more::after { content: ""; position: absolute; right: 0; bottom: 1px; border: 2px solid #000; border-left-color: transparent; border-top-color: transparent; }
.type { font: bold 18px/20px "Liberation Serif", serif; }
.toolbox hr { border: 0; height: 1px; background: #999; margin: 2px 1px 1px; }
.swatches { padding: 8px 0 4px 5px; }
.mask { margin: 2px 0 7px 18px; }
.screen { width: 39px; height: 20px; margin-left: 10px; border: 1px solid #aaa; border-radius: 3px; background: #ddd; }

.docarea { flex: 1; min-width: 0; display: grid; grid-template: minmax(0, 1fr) 15px / minmax(0, 1fr) 15px; background: #fff; }
.canvas { background: #c0c0c0; display: flex; align-items: center; justify-content: center; padding: 0 2px 4px 0; }
.card { width: 640px; height: 385px; background: #fff; border: 1px solid #000; padding: 73px 0 0 86px; color: #e60012; font: 24px/47px "Noto Sans CJK SC", sans-serif; letter-spacing: 4px; white-space: nowrap; }
.card p { display: grid; grid-template-columns: 371px 1fr; }
.vscroll { display: flex; flex-direction: column; justify-content: space-between; align-items: center; padding: 7px 0; background: #f0f0f0; border-left: 1px solid #fff; }
.vscroll path, .hscroll path { fill: #888; }
.status { grid-column: 1 / -1; display: flex; background: #f0f0f0; border-top: 1px solid #999; font-size: 11px; line-height: 14px; }
.status .zoom { width: 47px; height: 14px; border: 0; }
.sticon { width: 23px; display: flex; align-items: center; justify-content: center; }
.docinfo { width: 171px; border: solid #888; border-width: 0 1px; text-align: center; background: #ededed; }
.play { width: 14px; border-right: 1px solid #888; }
.hscroll { flex: 1; display: flex; justify-content: space-between; align-items: center; padding: 0 20px 0 7px; }

.dock { width: 251px; background: #646464; border-left: 2px solid #444; padding: 0 4px 7px 2px; display: flex; flex-direction: column; }
.dockhead { height: 18px; display: flex; align-items: center; padding: 0 2px 0 4px; gap: 6px; }
.bars { width: 6px; height: 12px; background: repeating-linear-gradient(90deg, #333 0 1px, #888 1px 2px); }
.bars.wide { margin-left: 1px; }
.end { margin-left: auto; }
.dockbody { flex: 1; min-height: 0; display: flex; gap: 2px; }
.iconcol { width: 27px; display: flex; flex-direction: column; gap: 2px; }
.icongroup { background: #ededed; border-radius: 2px; padding-bottom: 4px; display: flex; flex-direction: column; align-items: center; gap: 4px; }
.icongroup .strip { width: 100%; height: 10px; }
.icongroup button { width: 23px; height: 23px; border: 1px solid #bbb; border-radius: 3px; background: #f2f2f2; }
.icongroup svg { width: 18px; height: 18px; }
.icongroup .glyph { font: 17px/20px "Liberation Sans", sans-serif; color: #333; }

.panels { flex: 1; min-width: 0; display: flex; flex-direction: column; gap: 3px; }
.panel { background: #ededed; border-radius: 2px; border-bottom: 2px solid #bbb; }
.phead { height: 26px; display: flex; justify-content: space-between; background: linear-gradient(#f2f2f2, #c6c6c6); border-bottom: 1px solid #999; padding-left: 5px; }
.tabs { display: flex; align-items: flex-end; }
.tab { height: 17px; padding: 0 6px; gap: 4px; border: 1px solid #999; border-bottom: 0; border-radius: 5px 5px 0 0; background: linear-gradient(#dedede, #c4c4c4); font-size: 11px; color: #333; }
.tab.on { background: #ededed; height: 18px; margin-bottom: -1px; }
.pctl { display: flex; flex-direction: column; justify-content: space-between; align-items: flex-end; }
.pctl span { display: flex; gap: 5px; padding: 3px 3px 0 0; }
.nav { display: flex; flex-direction: column; height: 394px; }
.navview { flex: 1; display: flex; align-items: center; justify-content: center; }
.thumb { width: 202px; height: 123px; border: 1px solid #888; outline: 2px solid #ff4b46; outline-offset: -3px; background: #fff; padding: 22px 0 0 27px; color: #e60012; font: 8px/15px "Noto Sans CJK SC", sans-serif; letter-spacing: 1px; white-space: nowrap; }
.thumb p { display: grid; grid-template-columns: 116px 1fr; }
.navfoot { display: flex; align-items: center; height: 18px; margin: 0 2px; border-top: 1px solid #999; font-size: 11px; }
.navfoot input:first-child { width: 59px; height: 14px; margin-right: 9px; border-top: 0; }
.navfoot input[type=range] { appearance: none; width: 76px; height: 12px; margin: 0 8px 0 12px; padding: 0; border: 0; background: linear-gradient(#999, #999) no-repeat center / 100% 1px; }
.navfoot input[type=range]::-webkit-slider-thumb { appearance: none; width: 9px; height: 11px; border: 1px solid #777; border-radius: 5px 5px 0 0; background: #ddd; }
.color { display: grid; grid-template-columns: 33px 1fr; column-gap: 4px; padding: 9px 8px 8px; }
.color > svg { margin-top: 3px; }
.sliders { display: flex; flex-direction: column; gap: 4px; }
.sl { display: flex; align-items: center; height: 22px; }
.sl label { width: 10px; }
.sl svg { margin: 6px 0 0; }
.sl input { width: 36px; height: 22px; }
.spectrum { grid-column: 1 / -1; height: 17px; margin-top: 8px; border: 1px solid #999; display: flex; flex-direction: column; align-items: flex-end; background: linear-gradient(#fff, #fff0 50%, #000c), linear-gradient(90deg, #e60012, #fff100 17%, #009944 32%, #00a0e9 49%, #1d2088 65%, #e4007f 81%, #e60012); }
.spectrum i, .spectrum em { width: 8px; flex: 1; background: #fff; }
.spectrum em { background: #000; }

.layers { flex: 1; min-height: 0; display: flex; flex-direction: column; }
.lrow { display: flex; align-items: center; height: 27px; margin: 0 2px; padding: 0 2px; border-bottom: 1px solid #999; white-space: nowrap; justify-content: space-between; flex: none; }
.lrow select { width: 91px; height: 21px; padding: 0 5px; }
.pct { display: flex; border: 1px solid #aaa; }
.pct input { width: 38px; height: 17px; border: 0; }
.pct button { width: 17px; height: 17px; border: 1px solid #aaa; background: #e4e6ee; }
.locks { padding-left: 5px; gap: 5px; }
.locks label { margin-left: 12px; }
.lbody { flex: 1; min-height: 0; display: flex; margin: 0 2px; border-bottom: 1px solid #999; }
.llist { flex: 1; list-style: none; }
.llist li { height: 28px; border-bottom: 1px solid #999; display: flex; align-items: center; white-space: nowrap; }
.vis { width: 23px; height: 100%; border-right: 1px solid #999; display: flex; align-items: center; padding-left: 3px; }
.vis i { width: 16px; height: 16px; border: 1px solid #999; border-right-color: #fff; border-bottom-color: #fff; display: flex; align-items: center; justify-content: center; }
.th { width: 32px; height: 21px; margin: 0 7px 0 3px; border: 1px solid #000; background: #fff; flex: none; }
.th svg { width: 30px; height: 19px; }
.t { font: bold 13px/19px "Liberation Serif", serif; text-align: center; color: #222; }
.sel > :nth-child(n+2) { color: #fff; }
.sel { background: linear-gradient(90deg, #ededed 23px, #39f 23px); }
.sel > .th.t { color: #222; outline: 1px solid #fff; box-shadow: 0 0 0 2px #000; }
.lk { margin: 0 16px 0 auto; }
.slim { width: 14px; margin-right: 1px; }
.lfoot { height: 19px; flex: none; display: flex; align-items: center; justify-content: space-between; padding: 0 3px 2px 12px; }
.fx { font: italic bold 14px/14px "Liberation Serif", serif; }

.gauge { position: absolute; right: 0; top: 830px; width: 10px; height: 59px; border-radius: 4px 0 0 4px; border: 1px solid #2c3242; background: repeating-linear-gradient(#0000 0 1px, #454d61 1px 3px), linear-gradient(#20293a 58%, #c6e39a 58%, #58d8d0 90%, #454d61 90%); }
.mark { position: absolute; right: 85px; bottom: 35px; overflow: visible; pointer-events: none; }
.ink { fill: #fff; opacity: .72; filter: drop-shadow(0 0 2px #888); }
.m-bai { font: bold 78px "Liberation Sans", sans-serif; }
.m-cn { font: 900 59px "Noto Sans CJK SC", sans-serif; }
.m-url { font: 40px "Noto Sans", sans-serif; }
.m-du { font: 51px "Liberation Sans", sans-serif; fill: #000; stroke: #000; stroke-width: 1; }

.taskbar { height: 8px; flex: none; display: flex; gap: 3px; overflow: hidden; background: linear-gradient(90deg, #8a6c50, #6b5340 50%, #4e3d30 75%, #8a6850 82%, #4e3d30); border-top: 1px solid #332a22; }
.orb { width: 30px; height: 30px; margin: 0 15px 0 12px; border-radius: 50%; background: #a9c4d4; border: 1px solid #345; }
.taskbar button { width: 158px; height: 20px; border: 1px solid #eadccb; border-radius: 2px; background: linear-gradient(90deg, #c9b5a1, #a58367); justify-content: flex-start; padding: 3px 0 0 11px; align-items: flex-start; }
.taskbar .act { background: linear-gradient(90deg, #efe8e0, #cdbeb0); }
.ie { width: 24px; height: 24px; border-radius: 50%; background: #1c8ef0; }
.psb { width: 28px; height: 16px; background: #1d5fb4; }
.desk { width: 14px; margin-left: auto; background: #8a7c70; border: 1px solid #ccc; }
```
